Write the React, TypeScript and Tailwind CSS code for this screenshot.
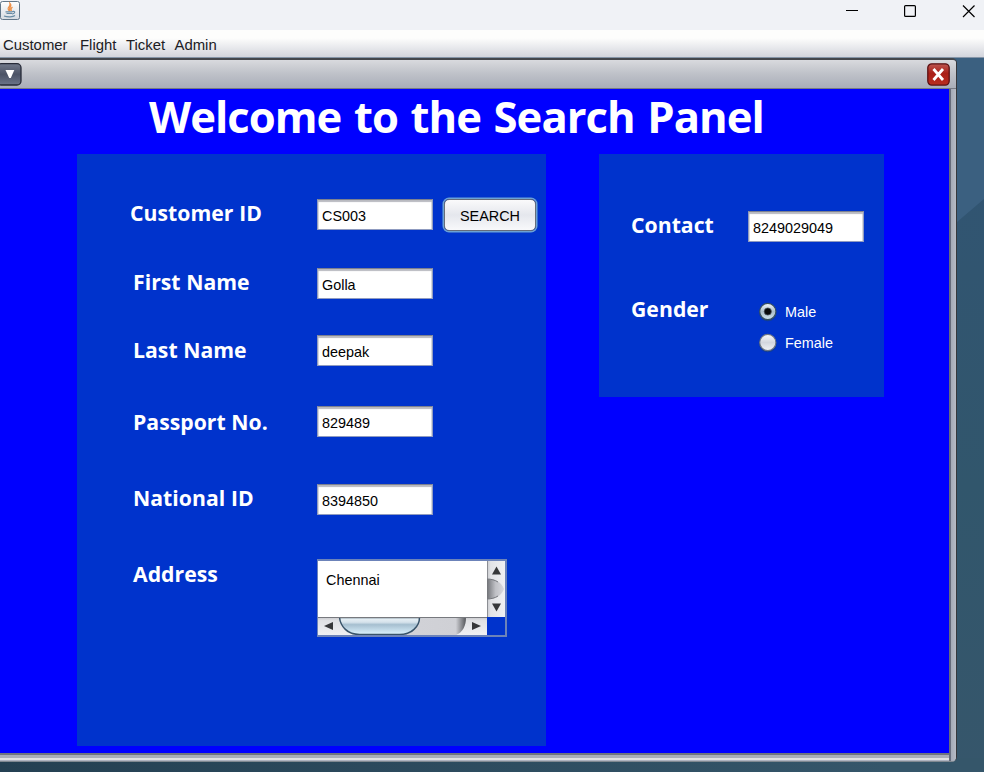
import React from "react";

const label = "relative block whitespace-nowrap font-['Open_Sans',sans-serif] text-[21.2px] leading-[30px] font-bold tracking-[0.03px] text-white";

function Field({ value }: { value: string }) {
  return (
    <div className="flex h-[31px] w-[116px] shrink-0 items-center border border-[#8f9bc0] border-t-[#7d8190] bg-white pl-1 pt-[3px] text-[14.4px] leading-none text-black shadow-[inset_0_2px_1px_#b9bac0,inset_1px_0_0_#dcdde0,inset_-1px_0_0_#dcdde0]">
      {value}
    </div>
  );
}

function Row({ name, value, gap, indent = "pl-[56px]", lift = "-mt-[1px]", children }: { name: React.ReactNode; value: string; gap: string; indent?: string; lift?: string; children?: React.ReactNode }) {
  return (
    <div className={`flex h-[31px] ${gap}`}>
      <div className={`w-[240px] shrink-0 ${indent}`}>
        <span className={`${label} ${lift}`}>{name}</span>
      </div>
      <Field value={value} />
      {children}
    </div>
  );
}

// Capital I without serifs, followed by a regular D.
function Id() {
  return (
    <>
      <span className="mx-[0.4px] font-['Lato',sans-serif] font-black">I</span>D
    </>
  );
}

function Radio({ on, text }: { on: boolean; text: string }) {
  return (
    <div className="flex h-[31px] items-center">
      <svg width="19" height="20" viewBox="0 0 19 20">
        <defs>
          <linearGradient id={on ? "ron" : "roff"} x1="0" y1="0" x2="0" y2="1">
            <stop offset="0" stopColor={on ? "#f4f8fa" : "#fafafa"} />
            <stop offset=".5" stopColor={on ? "#a9bdc9" : "#d3d6de"} />
            <stop offset="1" stopColor={on ? "#cfe4ee" : "#f2f3f6"} />
          </linearGradient>
        </defs>
        <circle cx="9.8" cy="10.500" r="8.8" fill="#1d4470" opacity=".6" />
        <circle cx="9.8" cy="9.500" r="8.1" fill={`url(#${on ? "ron" : "roff"})`} stroke={on ? "#36505f" : "#6d7684"} strokeWidth="1.1" />
        {on && <circle cx="9.8" cy="9.500" r="3.6" fill="#080a0c" stroke="#4a555d" strokeWidth=".7" />}
      </svg>
      <span className="ml-[8px] pt-px text-[14.4px] leading-none text-white">{text}</span>
    </div>
  );
}

function AddressBox() {
  return (
    <div className="flex h-[78px] w-[190px] shrink-0 flex-col border-2 border-l border-[#6c83b9]">
      <div className="flex h-[56px]">
        <div className="h-[56px] w-[169px] bg-white pl-[8px] pt-[11px] text-[14.4px] leading-[16px] text-black">Chennai</div>
        <svg width="18" height="56" viewBox="0 0 18 56">
          <defs>
            <linearGradient id="vb"><stop stopColor="#c5c7cb" /><stop offset=".2" stopColor="#e2e3e6" /><stop offset="1" stopColor="#eff0f3" /></linearGradient>
            <linearGradient id="vt"><stop stopColor="#717378" /><stop offset=".5" stopColor="#bfc0c5" /><stop offset="1" stopColor="#d8d9de" /></linearGradient>
          </defs>
          <rect width="18" height="56" fill="url(#vb)" />
          <path d="M.5 0v56" stroke="#8c8e94" />
          <path d="M0 18c9 0 14 3 17 10-3 7-8 10-17 10z" fill="url(#vt)" />
          <path d="M0 18c4 0 8 1 11 3M0 38c4 0 8-1 11-3" stroke="#77797e" fill="none" />
          <path d="M5 13.500h9L9.500 5.500zM5 42.500h9L9.500 50.500z" fill="#37383a" />
        </svg>
      </div>
      <svg width="169" height="18" viewBox="0 0 169 18">
        <defs>
          <linearGradient id="hb" x1="0" y1="0" x2="0" y2="1"><stop stopColor="#c5c7cb" /><stop offset=".2" stopColor="#e0e1e4" /><stop offset="1" stopColor="#eff0f3" /></linearGradient>
          <linearGradient id="thumb" x1="0" y1="0" x2="0" y2="1"><stop stopColor="#edf4f8" /><stop offset=".28" stopColor="#d5e2eb" /><stop offset=".42" stopColor="#a6bfd0" /><stop offset="1" stopColor="#dcf3fe" /></linearGradient>
          <linearGradient id="track"><stop stopColor="#d2d3d8" /><stop offset=".85" stopColor="#cfd0d5" /><stop offset="1" stopColor="#55575b" /></linearGradient>
        </defs>
        <rect width="169" height="18" fill="url(#hb)" />
        <path d="M80 0h68c0 9-3 15-10 18H80z" fill="url(#track)" />
        <path d="M21.500 .5c1 9 8 17 20 17h40c12 0 20-8 20-17z" fill="url(#thumb)" stroke="#385369" strokeWidth="1.5" />
        <path d="M0 .5h169" stroke="#77797e" />
        <path d="M15 5v8L6 9zM154 5v8L163 9z" fill="#37383a" />
      </svg>
    </div>
  );
}

export default function App() {
  return (
    <div className="flex h-[772px] w-[984px] flex-col overflow-hidden bg-[#31556f] font-['Liberation_Sans',Arial,sans-serif]">
      <header className="flex h-[30px] shrink-0 items-start justify-between bg-[#f0f2f6]">
        <svg width="21" height="22" viewBox="0 0 21 22">
          <defs><linearGradient id="jb" x1="0" y1="0" x2="0" y2="1"><stop stopColor="#fff" /><stop offset="1" stopColor="#d6dce2" /></linearGradient></defs>
          <rect x=".5" y="1.500" width="19" height="18" rx="2" fill="url(#jb)" stroke="#627789" />
          <path d="M9.500 11C5.500 7.500 11 7 10 3.500c3 3-2.500 4 0 7.500M11.500 11c-1.700-2.500.2-3.400 1-4" fill="none" stroke="#ed9149" strokeWidth="1.300" />
          <path d="M5.500 11.800h7M6.500 13.500h5.500M12.500 11.500c3-.8 3 2-.5 2.500M4 16c4 1.300 9 1 11-.5" fill="none" stroke="#688ba3" strokeWidth="1.200" />
        </svg>
        <svg width="144" height="24" viewBox="840 0 144 24" fill="none" stroke="#000">
          <path d="M846 10.500h12" />
          <rect x="904.600" y="5.600" width="10.800" height="10.800" rx="1" strokeWidth="1.200" />
          <path d="M963 5.500l11.500 11.500M974.500 5.500L963 17" strokeWidth="1.200" />
        </svg>
      </header>
      <nav className="flex h-[28px] shrink-0 border-b border-[#8595a8] bg-linear-to-b from-[#fdfdfc] from-30% to-[#d3d5dd] pl-[3px] pt-[7px] text-[14.9px] leading-[17px] text-[#202024]">
        <span className="w-[77px]">Customer</span>
        <span className="w-[46px]">Flight</span>
        <span className="w-[48.500px]">Ticket</span>
        <span>Admin</span>
      </nav>
      <main className="relative h-[714px]">
        <svg className="absolute inset-0" width="984" height="714" viewBox="0 0 984 714">
          <defs>
            <linearGradient id="desk" x1="0" y1="0" x2="0" y2="1"><stop stopColor="#315474" /><stop offset=".6" stopColor="#31566c" /><stop offset="1" stopColor="#36566b" /></linearGradient>
            <linearGradient id="foot"><stop stopColor="#244052" /><stop offset=".9" stopColor="#35566a" /></linearGradient>
          </defs>
          <rect width="984" height="714" fill="url(#desk)" />
          <path d="M950 0h34v141l-34 29z" fill="#3b6080" />
          <rect y="700" width="984" height="14" fill="url(#foot)" />
        </svg>
        <section className="relative flex h-[704px] w-[957px] flex-col overflow-hidden rounded-tr-[5px] rounded-br-[5px] border-r border-b border-t-2 border-t-[#44474d] border-r-[#36383c] border-b-[#808991] bg-[#aeb3c0]">
          <div className="flex h-[29px] shrink-0 items-center justify-between border-b border-[#777a84] bg-linear-to-b from-[#d9dade] via-[#bec1c8] to-[#a9aeb9] pr-[6.5px]">
            <svg width="22" height="23" viewBox="0 0 22 23">
              <defs><linearGradient id="mb" x1="0" y1="0" x2="0" y2="1"><stop stopColor="#71798a" /><stop offset=".5" stopColor="#4c5366" /><stop offset="1" stopColor="#6b7489" /></linearGradient></defs>
              <rect x="-3" y=".7" width="24" height="21.300" rx="4" fill="url(#mb)" stroke="#272b38" strokeWidth="1.300" />
              <path d="M5.500 7h8.800l-3.500 8h-1.600z" fill="white" />
            </svg>
            <svg width="23" height="23" viewBox="0 0 23 23">
              <defs><linearGradient id="cb" x1="0" y1="0" x2="0" y2="1"><stop stopColor="#bd5650" /><stop offset=".45" stopColor="#aa2018" /><stop offset="1" stopColor="#b92d20" /></linearGradient></defs>
              <rect x=".8" y=".8" width="21.400" height="21.300" rx="4" fill="url(#cb)" stroke="#5b1013" strokeWidth="1.300" />
              <path d="M6.500 6l9.500 11M16 6L6.500 17" stroke="#fff" strokeWidth="2.800" />
            </svg>
          </div>
          <div className="flex min-h-0 grow">
            <div className="flex grow flex-col">
              <div className="h-[664px] w-[949px] bg-[#0000ff]">
                <h1 className="h-[65px] pl-[149px] font-['Open_Sans',sans-serif] text-[43.6px] leading-[54px] font-bold tracking-[-0.98px] [word-spacing:2.3px] whitespace-nowrap text-white">Welcome to the Search Panel</h1>
                <div className="flex items-start gap-[53px] pl-[77px]">
                  <div className="h-[592px] w-[469px] bg-[#0033cc] pt-[45px]">
                    <Row name={<>Customer <Id /></>} value="CS003" gap="" indent="pl-[53px]">
                      <button className="ml-[11px] h-[32px] w-[92px] rounded-[5px] border border-[#666d7a] bg-linear-to-b from-[#fafafb] via-[#e5e7ed] to-[#f8f9fb] pt-[2px] text-[14.4px] leading-none text-black shadow-[0_0_0_1.5px_#6ca2d4]">SEARCH</button>
                    </Row>
                    <Row name="First Name" value="Golla" gap="mt-[38px]" />
                    <Row name="Last Name" value="deepak" gap="mt-[36px]" lift="mt-0" />
                    <Row name="Passport No." value="829489" gap="mt-[40px]" lift="mt-[1px]" />
                    <Row name={<>National <Id /></>} value="8394850" gap="mt-[47px]" />
                    <div className="mt-[44px] flex">
                      <div className="w-[240px] shrink-0 pl-[56px]"><span className={`${label} mt-0`}>Address</span></div>
                      <AddressBox />
                    </div>
                  </div>
                  <div className="h-[243px] w-[285px] bg-[#0033cc] pt-[57px]">
                    <div className="flex h-[31px]">
                      <div className="w-[149px] pl-[32px]"><span className={`${label} -mt-[1px]`}>Contact</span></div>
                      <Field value="8249029049" />
                    </div>
                    <div className="mt-[53px] flex">
                      <div className="w-[159px] pl-[32px]"><span className={`${label} -mt-[1px]`}>Gender</span></div>
                      <div className="pt-px"><Radio on text="Male" /><Radio on={false} text="Female" /></div>
                    </div>
                  </div>
                </div>
              </div>
              <div className="h-[7px] border-t-2 border-b-2 border-t-[#70757e] border-b-[#e0e1e3] bg-[#a9aeb8]" />
            </div>
            <div className="w-[7px] border-l-2 border-[#666c7c] bg-linear-to-r from-[#a4aab7] to-[#b7bbc5]" />
          </div>
        </section>
      </main>
    </div>
  );
}
